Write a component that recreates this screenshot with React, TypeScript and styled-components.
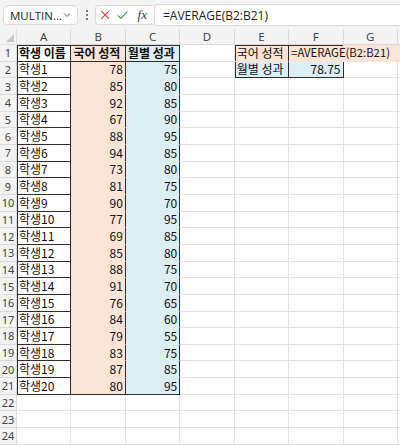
import React from "react";
import styled, { createGlobalStyle } from "styled-components";

const GlobalStyle = createGlobalStyle`
  html, body {
    margin: 0;
    padding: 0;
    background: #ffffff;
    overflow: hidden;
  }
  body {
    width: 400px;
    height: 447px;
    font-family: "Noto Sans CJK KR", "Noto Sans", sans-serif;
  }
`;

const COL_W = 54.43;
const ROW_H = 16.667;
const DARK = "#2e2e2e";
const GRID = "#e2e2e2";
const PEACH = "#fce4d6";
const BLUE = "#daeef3";

const scores: [number, number][] = [
  [78, 75], [85, 80], [92, 85], [67, 90], [88, 95],
  [94, 85], [73, 80], [81, 75], [90, 70], [77, 95],
  [69, 85], [85, 80], [88, 75], [91, 70], [76, 65],
  [84, 60], [79, 55], [83, 75], [87, 85], [80, 95],
];

type Align = "left" | "right";

interface cellSpec {
  text?: string;
  fill?: string;
  align?: Align;
  bold?: boolean;
  right?: boolean;
  bottom?: boolean;
  top?: boolean;
  left?: boolean;
  overflow?: boolean;
}

const COLS = ["A", "B", "C", "D", "E", "F", "G", ""];
const ROWS = 24;

// 셀 내용과 테두리 정보를 만듭니다.
function buildCell(row: number, col: number): cellSpec {
  if (row === 1) {
    if (col === 0) return { text: "학생 이름", bold: true, right: true, bottom: true, top: true, left: true };
    if (col === 1) return { text: "국어 성적", bold: true, fill: PEACH, right: true, bottom: true, top: true };
    if (col === 2) return { text: "월별 성과", bold: true, fill: BLUE, right: true, bottom: true, top: true };
    if (col === 4) return { text: "국어 성적", fill: PEACH, right: true, top: true, left: true };
    if (col === 5) return { text: "=AVERAGE(B2:B21)", fill: PEACH, top: true, overflow: true };
    if (col >= 6) return { fill: PEACH };
  }
  if (row === 2) {
    if (col === 4) return { text: "월별 성과", fill: BLUE, right: true, bottom: true, left: true };
    if (col === 5) return { text: "78.75", fill: BLUE, align: "right", right: true, bottom: true };
  }
  if (row >= 2 && row <= 21) {
    const [kor, month] = scores[row - 2];
    const last = row === 21;
    if (col === 0) return { text: `학생${row - 1}`, right: true, bottom: true, left: true };
    if (col === 1) return { text: String(kor), fill: PEACH, align: "right", right: true, bottom: last };
    if (col === 2) return { text: String(month), fill: BLUE, align: "right", right: true, bottom: last };
  }
  return {};
}

export default function App() {
  const cells: React.ReactNode[] = [];
  for (let r = 1; r <= ROWS; r++) {
    cells.push(<RowHead key={`rh${r}`}>{r}</RowHead>);
    COLS.forEach((_, c) => {
      const s = buildCell(r, c);
      cells.push(
        <Cell
          key={`${r}-${c}`}
          $fill={s.fill}
          $align={s.align ?? "left"}
          $bold={s.bold}
          $right={s.right}
          $bottom={s.bottom}
          $top={s.top}
          $left={s.left}
          $overflow={s.overflow}
        >
          {s.text && <CellText $overflow={s.overflow}>{s.text}</CellText>}
        </Cell>
      );
    });
  }

  return (
    <>
      <GlobalStyle />
      <Page>
        <FormulaBar>
          <NameBox>
            <NameText>MULTIN...</NameText>
            <svg width="10" height="10" viewBox="0 0 10 10">
              <path d="M2 3.5 L5 6.5 L8 3.5" fill="none" stroke="#555" strokeWidth="1" />
            </svg>
          </NameBox>
          <Dots>
            <Dot />
            <Dot />
            <Dot />
          </Dots>
          <IconBox>
            <svg width="12" height="12" viewBox="0 0 12 12">
              <path d="M1.5 1.5 L10.5 10.5 M10.5 1.5 L1.5 10.5" stroke="#d13438" strokeWidth="1.2" />
            </svg>
            <svg width="13" height="12" viewBox="0 0 13 12">
              <path d="M1 6.5 L4.5 10 L12 2" fill="none" stroke="#3a9a4a" strokeWidth="1.2" />
            </svg>
            <Fx>fx</Fx>
          </IconBox>
          <FormulaInput>=AVERAGE(B2:B21)</FormulaInput>
        </FormulaBar>
        <Sheet>
          <Corner>
            <svg width="8" height="8" viewBox="0 0 8 8">
              <path d="M8 0 L8 8 L0 8 Z" fill="#c8c8c8" />
            </svg>
          </Corner>
          {COLS.map((c, i) => (
            <ColHead key={i}>{c}</ColHead>
          ))}
          {cells}
        </Sheet>
      </Page>
    </>
  );
}

const Page = styled.div`
  display: flex;
  flex-direction: column;
  width: 400px;
  height: 447px;
  overflow: hidden;
`;

const FormulaBar = styled.div`
  display: flex;
  align-items: center;
  height: 29px;
  padding: 1px 0 0 3px;
  background: #f3f3f3;
  box-sizing: border-box;
`;

const NameBox = styled.div`
  display: flex;
  align-items: center;
  justify-content: space-between;
  width: 75px;
  height: 20px;
  padding: 0 5px 0 6px;
  box-sizing: border-box;
  background: #fff;
  border: 1px solid #dcdcdc;
  border-radius: 4px;
`;

const NameText = styled.span`
  font-family: "Open Sans", "Noto Sans", sans-serif;
  font-size: 11.5px;
  color: #222;
`;

const Dots = styled.div`
  display: flex;
  flex-direction: column;
  align-items: center;
  gap: 2px;
  width: 17px;
`;

const Dot = styled.span`
  width: 2px;
  height: 2px;
  background: #555;
  border-radius: 1px;
`;

const IconBox = styled.div`
  display: flex;
  align-items: center;
  gap: 7px;
  height: 20px;
  width: 58px;
  padding: 0 6px 0 4px;
  box-sizing: border-box;
  background: #fff;
  border: 1px solid #dcdcdc;
  border-right: none;
  border-radius: 4px 0 0 4px;
`;

const Fx = styled.span`
  font-family: "Liberation Serif", "DejaVu Serif", serif;
  font-style: italic;
  font-size: 13px;
  color: #333;
  margin-left: 2px;
`;

const FormulaInput = styled.div`
  flex: 1;
  display: flex;
  align-items: center;
  height: 20px;
  margin-left: 1px;
  padding-left: 8px;
  background: #fff;
  border: 1px solid #dcdcdc;
  border-right: none;
  border-radius: 4px 0 0 4px;
  font-family: "Open Sans", "Noto Sans", sans-serif;
  font-size: 12px;
  color: #222;
`;

const Sheet = styled.div`
  display: grid;
  grid-template-columns: 17px repeat(8, ${COL_W}px);
  grid-template-rows: 16px repeat(${ROWS}, ${ROW_H}px);
  color: #111;
`;

const Corner = styled.div`
  display: flex;
  align-items: flex-end;
  justify-content: flex-end;
  padding: 0 2px 2px 0;
  background: #f3f3f3;
  border-right: 1px solid ${GRID};
  border-bottom: 1px solid ${GRID};
  box-sizing: border-box;
`;

const ColHead = styled.div`
  display: flex;
  align-items: center;
  justify-content: center;
  background: #f3f3f3;
  border-right: 1px solid #dadada;
  border-bottom: 1px solid #dadada;
  box-sizing: border-box;
  font-family: "Noto Sans", sans-serif;
  font-size: 11.5px;
  color: #444;
`;

const RowHead = styled.div`
  display: flex;
  align-items: center;
  justify-content: center;
  background: #f3f3f3;
  border-right: 1px solid #dadada;
  border-bottom: 1px solid #dadada;
  box-sizing: border-box;
  font-family: "Noto Sans", sans-serif;
  font-size: 11px;
  color: #444;
`;

const Cell = styled.div<{
  $fill?: string;
  $align: Align;
  $bold?: boolean;
  $right?: boolean;
  $bottom?: boolean;
  $top?: boolean;
  $left?: boolean;
  $overflow?: boolean;
}>`
  position: relative;
  display: flex;
  align-items: center;
  justify-content: ${(p) => (p.$align === "right" ? "flex-end" : "flex-start")};
  padding: 0 2px;
  box-sizing: border-box;
  background: ${(p) => p.$fill ?? "#fff"};
  border-right: 1px solid ${(p) => (p.$right ? DARK : p.$fill ? p.$fill : GRID)};
  border-bottom: 1px solid ${(p) => (p.$bottom ? DARK : p.$fill ? p.$fill : GRID)};
  box-shadow: ${(p) =>
    [p.$top ? `inset 0 1px 0 ${DARK}` : "", p.$left ? `inset 1px 0 0 ${DARK}` : ""]
      .filter(Boolean)
      .join(", ") || "none"};
  font-weight: ${(p) => (p.$bold ? 700 : 400)};
  white-space: nowrap;
  overflow: ${(p) => (p.$overflow ? "visible" : "hidden")};
  z-index: ${(p) => (p.$overflow ? 1 : 0)};
`;

const CellText = styled.span<{ $overflow?: boolean }>`
  font-size: ${(p) => (p.$overflow ? "11.3px" : "12px")};
  line-height: 1;
`;
